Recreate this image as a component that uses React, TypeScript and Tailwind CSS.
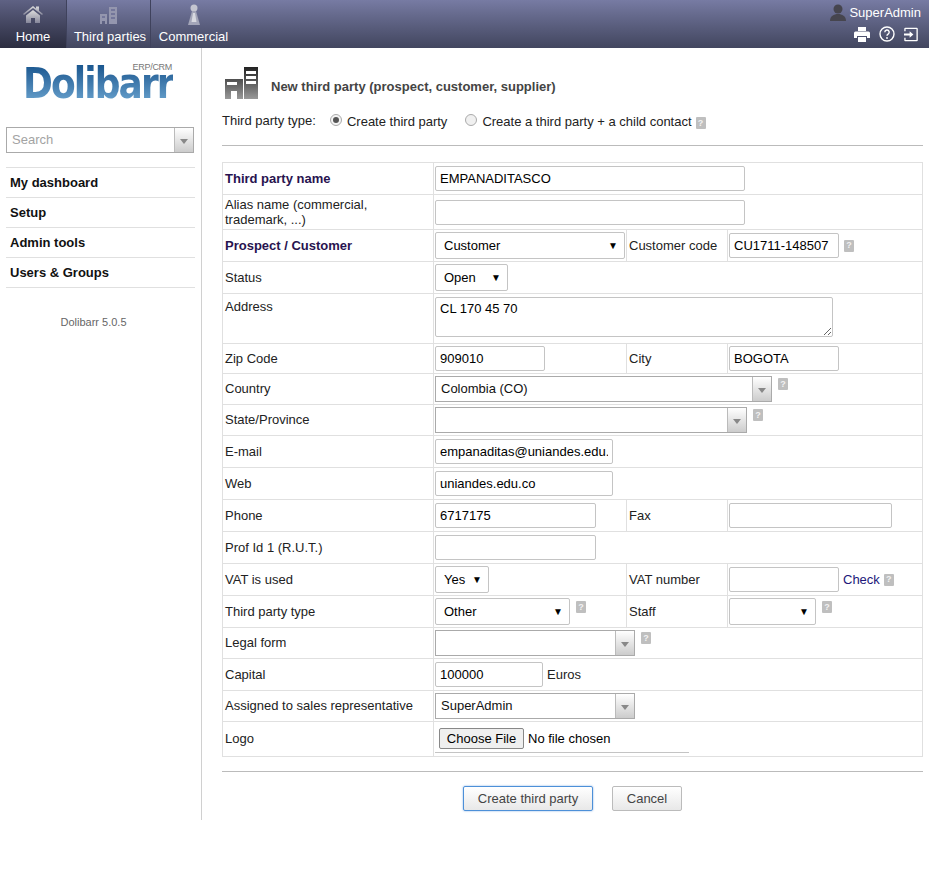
import React from "react";

function Help({ className = "" }: { className?: string }) {
  return (
    <span className={`inline-flex h-[12px] w-[10px] items-center justify-center rounded-[1px] bg-[#bfbfbf] text-[9px] leading-none font-bold text-[#f2f2f2] ${className}`}>?</span>
  );
}

function Input({ w, value = "" }: { w: string; value?: string }) {
  return (
    <input readOnly value={value} className={`${w} h-[25px] rounded-[2px] border border-[#c4c4c4] bg-white px-[4px] text-[13px] text-black outline-none`} />
  );
}

function NativeSelect({ w, value = "" }: { w: string; value?: string }) {
  return (
    <div className={`${w} flex h-[27px] items-center justify-between rounded-[2px] border border-[#c4c4c4] bg-white pr-[6px] pl-[8px] text-[13px] text-black`}>
      <span>{value}</span>
      <span className="text-[10px] leading-none">▼</span>
    </div>
  );
}

function Combo({ w, value = "", placeholder = false }: { w: string; value?: string; placeholder?: boolean }) {
  return (
    <div className={`${w} flex h-[26px] items-stretch border border-[#aaaaaa] bg-white text-[13px]`}>
      <div className={`flex-1 truncate pl-[5px] leading-[23px] ${placeholder ? "text-[#a3a3a3]" : "text-[#111]"}`}>{value}</div>
      <div className="flex w-[19px] items-center justify-center border-l border-[#bbb] bg-gradient-to-b from-white to-[#cccccc]">
        <svg width="8" height="5" viewBox="0 0 8 5" className="mt-[3px]"><path d="M0 0h8L4 5z" fill="#888" /></svg>
      </div>
    </div>
  );
}

const LABEL = "border border-[#e0e0e0] px-[2px] py-0 align-middle text-[13px] text-[#222]";
const CELL = "border border-[#e0e0e0] px-[1px] py-0 align-middle text-[13px] text-[#222]";

function Row({ h, label, bold, children, c3, c4 }: { h: string; label: React.ReactNode; bold?: boolean; children?: React.ReactNode; c3?: string; c4?: React.ReactNode }) {
  const wide = c3 === undefined;
  return (
    <tr className={h}>
      <td className={`${LABEL} ${bold ? "font-bold text-[#28134f]" : ""}`}>{label}</td>
      {wide ? (
        <td colSpan={3} className={CELL}>{children}</td>
      ) : (
        <>
          <td className={CELL}>{children}</td>
          <td className={LABEL}>{c3}</td>
          <td className={CELL}>{c4}</td>
        </>
      )}
    </tr>
  );
}

function Tab({ label, active, w, icon, last, labelClass = "" }: { label: string; active?: boolean; w: string; icon: React.ReactNode; last?: boolean; labelClass?: string }) {
  return (
    <div className={`${w} flex h-[48px] flex-col items-center ${last ? "" : "border-r border-[#3f425c]"} ${active ? "bg-gradient-to-b from-[#5f6284] to-[#2b2d40]" : ""}`}>
      <div className="flex h-[29px] items-center justify-center">{icon}</div>
      <div className={`text-[13px] leading-[16px] text-white ${labelClass}`}>{label}</div>
    </div>
  );
}

export default function App() {
  return (
    <div className="min-h-[888px] bg-white font-['Liberation_Sans',Arial,sans-serif]">
      <header className="flex h-[48px] justify-between bg-gradient-to-b from-[#777ba3] to-[#42465f]">
        <nav className="flex">
          <Tab label="Home" active w="w-[67px]" icon={
            <svg width="20" height="19" viewBox="0 0 20 19"><defs><linearGradient id="h" x1="0" y1="0" x2="0" y2="1"><stop offset="0" stopColor="#ddd" /><stop offset="1" stopColor="#85869a" /></linearGradient></defs><path d="M0 9 10 1l3 2.400V1.500h3v4.300L20 9l-1 1-9-7-9 7z" fill="url(#h)" /><path d="M3 10.500 10 5l7 5.500V18h-5v-5H8v5H3z" fill="url(#h)" /></svg>
          } />
          <Tab label="Third parties" w="w-[84px]" labelClass="ml-[3px]" icon={
            <svg width="18" height="18" viewBox="0 0 18 18"><path d="M0 8h7v10H5v-3H2v3H0zM9 1h8v17H9z" fill="#9496ae" /><path d="M2 10h3v2H2zM11 3h4v2h-4zM11 7h4v2h-4zM11 11h4v2h-4z" fill="#73769a" /></svg>
          } />
          <Tab label="Commercial" w="w-[85px]" icon={
            <svg width="12" height="21" viewBox="0 0 12 21"><circle cx="6" cy="4" r="3.500" fill="#c4c5d0" /><path d="M4 7h4l4 14H0z" fill="#a3a5b8" /><path d="M5 9h2l1.500 9h-5z" fill="#d8d9e0" /></svg>
          } last />
        </nav>
        <div className="flex flex-col items-end pr-[8px]">
          <div className="flex h-[25px] items-center gap-[3px]">
            <svg width="16" height="17" viewBox="0 0 16 17"><circle cx="8" cy="5" r="4.500" fill="#46454e" /><path d="M0 17c0-5 4-7 8-7s8 2 8 7z" fill="#46454e" /></svg>
            <span className="text-[13px] text-white">SuperAdmin</span>
          </div>
          <div className="mt-[1px] mr-[2px] flex items-center gap-[9px]">
            <svg width="16" height="15" viewBox="0 0 16 15"><path d="M4 0h8v4H4zM1.500 4.500h13A1.500 1.500 0 0 1 16 6v5h-3V9H3v2H0V6a1.500 1.500 0 0 1 1.500-1.500zM4 10h8v5H4z" fill="#fff" /></svg>
            <svg width="16" height="16" viewBox="0 0 16 16" fill="none"><circle cx="8" cy="8" r="7" stroke="#fff" strokeWidth="1.400" /><path d="M5.800 6.200a2.200 2.200 0 1 1 3.300 1.900c-.7.400-1.100.8-1.100 1.600" stroke="#fff" strokeWidth="1.400" /><circle cx="8" cy="12" r=".9" fill="#fff" /></svg>
            <svg width="15" height="15" viewBox="0 0 16 15" fill="none"><path d="M1 4V1.500A.5.5 0 0 1 1.500 1h12a.5.5 0 0 1 .5.5v12a.5.5 0 0 1-.5.5h-12a.5.5 0 0 1-.5-.5V11" stroke="#fff" strokeWidth="1.400" /><path d="M0 6.500h6V4l4 3.500L6 11V8.500H0z" fill="#fff" /></svg>
          </div>
        </div>
      </header>

      <div className="flex">
        <aside className="h-[772px] w-[202px] shrink-0 border-r border-[#d0d0d0] pl-[6px]">
          <div className="relative mt-[12px] ml-[18px] h-[44px] w-[150px]">
            <span className="absolute top-[3px] left-[-1px] origin-top scale-y-[1.2] bg-gradient-to-b from-[#14538c] to-[#6ba4cf] bg-clip-text font-['DejaVu_Sans',sans-serif] text-[36px] leading-[34px] font-bold tracking-[-1.900px] text-transparent">Dolibarr</span>
            <span className="absolute top-[2px] right-[2px] text-[9px] leading-[10px] tracking-[-0.300px] text-[#777]">ERP/CRM</span>
          </div>
          <div className="mt-[23px]"><Combo w="w-[188px]" value="Search" placeholder /></div>
          <div className="mt-[14px] w-[189px] border-t border-[#e0e0e0]">
            {["My dashboard", "Setup", "Admin tools", "Users & Groups"].map((m) => (
              <div key={m} className="h-[30px] border-b border-[#e0e0e0] pl-[4px] text-[13px] leading-[29px] font-bold text-[#111]">{m}</div>
            ))}
          </div>
          <div className="mt-[27px] w-[175px] text-center text-[11px] leading-[14px] text-[#666]">Dolibarr 5.0.5</div>
        </aside>

        <main className="ml-[20px] w-[701px]">
          <div className="mt-[23px] flex items-center gap-[13px]">
            <svg width="33" height="32" viewBox="0 0 33 32" className="ml-[3px] -translate-y-[4px]">
              <defs><linearGradient id="g" x1="0" y1="0" x2="0" y2="1"><stop offset="0" stopColor="#222" /><stop offset="1" stopColor="#999" /></linearGradient></defs>
              <path d="M0 12h18v20h-6v-8H6v8H0zM19 0h14v32H19z" fill="url(#g)" />
              <path d="M2 15h10v3H2zM21 4h10v3H21zM21 9h10v3H21zM21 14h10v3H21z" fill="#fff" />
            </svg>
            <h1 className="text-[13px] font-bold text-[#444]">New third party (prospect, customer, supplier)</h1>
          </div>
          <div className="mt-[8px] flex h-[20px] items-center text-[13px] text-[#222]">
            <span>Third party type:</span>
            <span className="ml-[14px] flex h-[12px] w-[12px] -translate-y-[1px] items-center justify-center rounded-full border border-[#aaa] bg-[#f4f4f4]"><span className="h-[6px] w-[6px] rounded-full bg-[#555]" /></span>
            <span className="ml-[5px] translate-y-[1px]">Create third party</span>
            <span className="ml-[18px] h-[12px] w-[12px] -translate-y-[1px] rounded-full border border-[#aaa] bg-[#f0f0f0]" />
            <span className="ml-[5px] translate-y-[1px]">Create a third party + a child contact</span>
            <Help className="ml-[4px] translate-y-[2px]" />
          </div>
          <div className="mt-[14px] border-t border-[#bbbbbb]" />

          <table className="mt-[16px] w-[701px] table-fixed border-collapse">
            <colgroup>
              <col className="w-[211px]" /><col className="w-[193px]" /><col className="w-[101px]" /><col />
            </colgroup>
            <tbody>
              <Row h="h-[32px]" label="Third party name" bold><Input w="w-[310px]" value="EMPANADITASCO" /></Row>
              <Row h="h-[35px]" label={<span className="block leading-[15px]">Alias name (commercial, trademark, ...)</span>}><Input w="w-[310px]" /></Row>
              <Row h="h-[32px]" label="Prospect / Customer" bold c3="Customer code" c4={<span className="flex items-center"><Input w="w-[110px]" value="CU1711-148507" /><Help className="ml-[5px]" /></span>}>
                <NativeSelect w="w-[190px]" value="Customer" />
              </Row>
              <Row h="h-[32px]" label="Status"><NativeSelect w="w-[73px]" value="Open" /></Row>
              <tr className="h-[50px]">
                <td className={`${LABEL} !align-top pt-[3px]`}>Address</td>
                <td colSpan={3} className={`${CELL} !align-top pt-[3px]`}>
                  <textarea readOnly value="CL 170 45 70" className="block h-[40px] w-[398px] rounded-[2px] border border-[#c4c4c4] bg-white px-[4px] py-[3px] text-[13px] leading-[16px] text-black outline-none" />
                </td>
              </tr>
              <Row h="h-[30px]" label="Zip Code" c3="City" c4={<Input w="w-[110px]" value="BOGOTA" />}><Input w="w-[110px]" value="909010" /></Row>
              <Row h="h-[31px]" label="Country"><span className="flex items-start"><Combo w="w-[337px]" value="Colombia (CO)" /><Help className="ml-[6px] mt-[2px]" /></span></Row>
              <Row h="h-[31px]" label="State/Province"><span className="flex items-start"><Combo w="w-[312px]" /><Help className="ml-[6px] mt-[2px]" /></span></Row>
              <Row h="h-[32px]" label="E-mail"><Input w="w-[178px]" value="empanaditas@uniandes.edu.co" /></Row>
              <Row h="h-[32px]" label="Web"><Input w="w-[178px]" value="uniandes.edu.co" /></Row>
              <Row h="h-[32px]" label="Phone" c3="Fax" c4={<Input w="w-[163px]" />}><Input w="w-[161px]" value="6717175" /></Row>
              <Row h="h-[32px]" label="Prof Id 1 (R.U.T.)"><Input w="w-[161px]" /></Row>
              <Row h="h-[32px]" label="VAT is used" c3="VAT number" c4={<span className="flex items-center"><Input w="w-[110px]" /><span className="ml-[4px] text-[#22177a]">Check</span><Help className="ml-[4px]" /></span>}>
                <NativeSelect w="w-[54px]" value="Yes" />
              </Row>
              <Row h="h-[32px]" label="Third party type" c3="Staff" c4={<span className="flex items-start"><NativeSelect w="w-[87px]" /><Help className="ml-[6px] mt-[3px]" /></span>}>
                <span className="flex items-start"><NativeSelect w="w-[135px]" value="Other" /><Help className="ml-[6px] mt-[3px]" /></span>
              </Row>
              <Row h="h-[31px]" label="Legal form"><span className="flex items-start"><Combo w="w-[200px]" /><Help className="ml-[6px] mt-[2px]" /></span></Row>
              <Row h="h-[32px]" label="Capital"><span className="flex items-center"><Input w="w-[108px]" value="100000" /><span className="ml-[4px]">Euros</span></span></Row>
              <Row h="h-[31px]" label="Assigned to sales representative"><Combo w="w-[200px]" value="SuperAdmin" /></Row>
              <tr className="h-[35px]">
                <td className={LABEL}>Logo</td>
                <td colSpan={3} className={CELL}>
                  <div className="flex h-[28px] w-[254px] items-center border-b border-[#c4c4c4] pl-[4px]">
                    <span className="flex h-[21px] w-[85px] items-center justify-center rounded-[2px] border border-[#888] bg-[#efefef] text-[13px] text-black">Choose File</span>
                    <span className="ml-[4px] text-[13px] text-black">No file chosen</span>
                  </div>
                </td>
              </tr>
            </tbody>
          </table>

          <div className="mt-[14px] border-t border-[#bbbbbb]" />
          <div className="mt-[14px] flex justify-center gap-[19px]">
            <span className="flex h-[25px] w-[130px] items-center justify-center rounded-[2px] border border-[#4d90d8] bg-gradient-to-b from-white to-[#e8e8e8] text-[13px] text-[#444] shadow-[0_0_2px_#7aa8e0]">Create third party</span>
            <span className="flex h-[25px] w-[70px] items-center justify-center rounded-[2px] border border-[#bbb] bg-gradient-to-b from-white to-[#e8e8e8] text-[13px] text-[#444]">Cancel</span>
          </div>
        </main>
      </div>
    </div>
  );
}
